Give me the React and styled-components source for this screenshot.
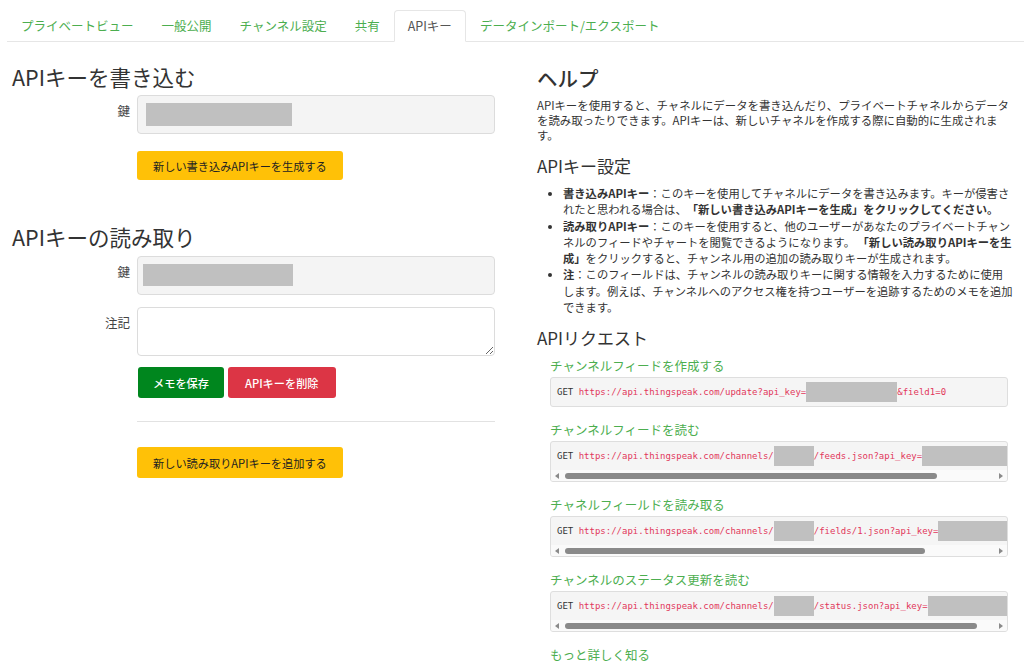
import React from 'react';
import styled, { createGlobalStyle } from 'styled-components';

const GlobalStyle = createGlobalStyle`
  body {
    margin: 0;
    background: #fff;
    font-family: "Noto Sans CJK JP", "Noto Sans", sans-serif;
    color: #333;
    text-spacing-trim: space-all;
  }
`;

const Page = styled.div`
  width: 1024px;
  height: 664px;
  overflow: hidden;
`;

const TabBar = styled.ul`
  display: flex;
  list-style: none;
  margin: 10px 0 0 7px;
  padding: 0;
  border-bottom: 1px solid #e6e6e6;
`;

const Tab = styled.li`
  height: 30px;
  line-height: 30px;
  padding: 0 13px;
  font-size: 12.5px;
  color: ${(p) => (p.active ? '#555' : '#4cae4f')};
  border: 1px solid ${(p) => (p.active ? '#e6e6e6' : 'transparent')};
  border-bottom-color: ${(p) => (p.active ? '#fff' : 'transparent')};
  border-radius: 4px 4px 0 0;
  margin-bottom: -1px;
  background: ${(p) => (p.active ? '#fff' : 'transparent')};
  white-space: nowrap;
`;

const Main = styled.div`
  display: grid;
  grid-template-columns: 525px 499px;
`;

const LeftCol = styled.div`
  min-width: 0;
  padding: 0 30px 0 12px;
`;

const RightCol = styled.div`
  min-width: 0;
  padding: 0 12px 0 12px;
`;

const BigTitle = styled.h3`
  margin: ${(p) => p.top || '21px'} 0 ${(p) => p.bottom || '4px'};
  font-size: 21.5px;
  font-weight: 400;
  line-height: 28px;
  color: #333;
`;

const FormRow = styled.div`
  display: grid;
  grid-template-columns: 125px minmax(0, 1fr);
  margin-bottom: ${(p) => p.gap || '12px'};
`;

const Label = styled.label`
  text-align: right;
  padding: 10px 7px 0 0;
  font-size: 12.5px;
  line-height: 12px;
  color: #444;
`;

const Field = styled.div`
  grid-column: 2;
`;

const KeyBox = styled.div`
  height: 39px;
  box-sizing: border-box;
  border: 1px solid #dcdcdc;
  border-radius: 4px;
  background: #f4f4f4;
  padding: 7px ${(p) => p.inset || '8px'};
`;

const Redact = styled.span`
  display: inline-block;
  width: ${(p) => p.w}px;
  height: ${(p) => p.h || 20}px;
  background: #c0c0c0;
  vertical-align: top;
`;

const Memo = styled.textarea`
  display: block;
  width: 100%;
  box-sizing: border-box;
  height: 49px;
  margin: 0;
  border: 1px solid #dcdcdc;
  border-radius: 4px;
  background: #fff;
  resize: vertical;
  font: inherit;
`;

const ButtonRow = styled.div`
  display: flex;
  gap: 4px;
  margin-left: 1px;
`;

const Button = styled.button`
  height: ${(p) => (p.tall ? '31px' : '29px')};
  padding: 0 ${(p) => p.pad || '15px'};
  border: 1px solid transparent;
  border-radius: 3px;
  font-family: inherit;
  font-size: 11.2px;
  font-weight: ${(p) => (p.kind === 'warn' ? 400 : 500)};
  color: ${(p) => (p.kind === 'warn' ? '#222' : '#fff')};
  background: ${(p) =>
    p.kind === 'save' ? '#00861e' : p.kind === 'danger' ? '#dc3545' : '#ffc107'};
  cursor: pointer;
`;

const Divider = styled.hr`
  border: 0;
  border-top: 1px solid #e2e2e2;
  margin: 23px 0 25px;
`;

const HelpTitle = styled.h4`
  margin: 22px 0 6px;
  font-size: 20.5px;
  font-weight: 500;
  line-height: 28px;
  color: #333;
`;

const Para = styled.p`
  margin: 0;
  font-size: 11.4px;
  line-height: 15px;
  color: #333;
`;

const SubTitle = styled.h5`
  margin: ${(p) => p.top || '12px'} 0 8px;
  font-size: 17px;
  font-weight: 400;
  line-height: 22px;
  color: #333;
`;

const List = styled.ul`
  margin: 0;
  padding-left: 26px;
  font-size: 11.3px;
  line-height: 16.3px;
  color: #333;
  white-space: nowrap;
`;

const Requests = styled.div`
  padding: 0 4px 0 13px;
`;

const ReqTitle = styled.div`
  font-size: 12.5px;
  line-height: 18px;
  color: #4cae4f;
  margin-bottom: 2px;
`;

const CodeBox = styled.div`
  margin: 0 0 14px;
  border: 1px solid #dedede;
  border-radius: 3px;
  background: #f5f5f5;
  overflow: hidden;
`;

const CodeLine = styled.pre`
  margin: 0;
  padding: 4px 6px;
  font-family: "DejaVu Sans Mono", "Liberation Mono", monospace;
  font-size: 9px;
  line-height: 20px;
  color: #333;
  white-space: nowrap;
  overflow: hidden;
`;

const ScrollTrack = styled.div`
  display: flex;
  align-items: center;
  height: 11px;
  padding: 0 4px;
  background: #fafafa;
`;

const Arrow = styled.span`
  width: 0;
  height: 0;
  border-top: 3px solid transparent;
  border-bottom: 3px solid transparent;
  border-${(p) => (p.dir === 'left' ? 'right' : 'left')}: 4px solid #8a8a8a;
  margin-left: ${(p) => (p.dir === 'left' ? '0' : 'auto')};
`;

const Thumb = styled.span`
  height: 6px;
  margin-left: 6px;
  border-radius: 3px;
  background: #8a8a8a;
`;

const Url = styled.span`
  color: #e2375b;
`;

const MoreLink = styled.div`
  font-size: 12.5px;
  line-height: 18px;
  color: #4cae4f;
  margin-top: 8px;
`;

const tabs = ['プライベートビュー', '一般公開', 'チャンネル設定', '共有', 'APIキー', 'データインポート/エクスポート'];

const requests = [
  { title: 'チャンネルフィードを作成する', path: 'update?api_key=', key: 91, tail: '&field1=0' },
  { title: 'チャンネルフィードを読む', path: 'channels/', id: true, rest: '/feeds.json?api_key=', key: 165, thumb: 372 },
  { title: 'チャネルフィールドを読み取る', path: 'channels/', id: true, rest: '/fields/1.json?api_key=', key: 170, thumb: 360 },
  { title: 'チャンネルのステータス更新を読む', path: 'channels/', id: true, rest: '/status.json?api_key=', key: 110, thumb: 412 },
];

export default function App() {
  return (
    <Page>
      <GlobalStyle />
      <TabBar>
        {tabs.map((t) => (
          <Tab key={t} active={t === 'APIキー'}>
            {t}
          </Tab>
        ))}
      </TabBar>
      <Main>
        <LeftCol>
          <BigTitle>APIキーを書き込む</BigTitle>
          <FormRow gap="17px">
            <Label>鍵</Label>
            <KeyBox>
              <Redact w={146} h={23} />
            </KeyBox>
          </FormRow>
          <FormRow>
            <Field>
              <Button kind="warn">新しい書き込みAPIキーを生成する</Button>
            </Field>
          </FormRow>

          <BigTitle top="43px" bottom="5px">APIキーの読み取り</BigTitle>
          <FormRow>
            <Label>鍵</Label>
            <KeyBox inset="5px">
              <Redact w={150} h={22} />
            </KeyBox>
          </FormRow>
          <FormRow gap="11px">
            <Label>注記</Label>
            <Memo />
          </FormRow>
          <FormRow gap="0">
            <Field>
              <ButtonRow>
                <Button kind="save" tall pad="14px">メモを保存</Button>
                <Button kind="danger" tall pad="16px">APIキーを削除</Button>
              </ButtonRow>
              <Divider />
              <Button kind="warn" tall>新しい読み取りAPIキーを追加する</Button>
            </Field>
          </FormRow>
        </LeftCol>

        <RightCol>
          <HelpTitle>ヘルプ</HelpTitle>
          <Para>
            APIキーを使用すると、チャネルにデータを書き込んだり、プライベートチャネルからデータを読み取ったりできます。APIキーは、新しいチャネルを作成する際に自動的に生成されます。
          </Para>

          <SubTitle>APIキー設定</SubTitle>
          <List>
            <li>
              <b>書き込みAPIキー</b>：このキーを使用してチャネルにデータを書き込みます。キーが侵害さ
              <br />
              れたと思われる場合は、<b>「新しい書き込みAPIキーを生成」をクリックしてください。</b>
            </li>
            <li>
              <b>読み取りAPIキー</b>：このキーを使用すると、他のユーザーがあなたのプライベートチャン
              <br />
              ネルのフィードやチャートを閲覧できるようになります。 <b>「新しい読み取りAPIキーを生</b>
              <br />
              <b>成」</b>をクリックすると、チャンネル用の追加の読み取りキーが生成されます。
            </li>
            <li>
              <b>注</b>：このフィールドは、チャンネルの読み取りキーに関する情報を入力するために使用
              <br />
              します。例えば、チャンネルへのアクセス権を持つユーザーを追跡するためのメモを追加
              <br />
              できます。
            </li>
          </List>

          <SubTitle top="12px">APIリクエスト</SubTitle>
          <Requests>
            {requests.map((r) => (
              <div key={r.title}>
                <ReqTitle>{r.title}</ReqTitle>
                <CodeBox>
                  <CodeLine>
                    GET <Url>https://api.thingspeak.com/{r.path}</Url>
                    {r.id && <Redact w={40} />}
                    {r.rest && <Url>{r.rest}</Url>}
                    <Redact w={r.key} />
                    {r.tail && <Url>{r.tail}</Url>}
                  </CodeLine>
                  {r.thumb && (
                    <ScrollTrack>
                      <Arrow dir="left" />
                      <Thumb style={{ width: r.thumb }} />
                      <Arrow dir="right" />
                    </ScrollTrack>
                  )}
                </CodeBox>
              </div>
            ))}
            <MoreLink>もっと詳しく知る</MoreLink>
          </Requests>
        </RightCol>
      </Main>
    </Page>
  );
}
